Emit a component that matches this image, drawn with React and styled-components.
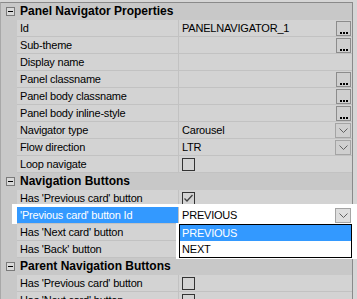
import React from "react";
import styled, { createGlobalStyle } from "styled-components";

const Global = createGlobalStyle`
  html, body { margin: 0; padding: 0; background: #d6d6d6; }
  body { font-family: "Liberation Sans", Arial, sans-serif; font-size: 11px; letter-spacing: -0.2px; color: #000; }
  #root { width: 357px; height: 299px; overflow: hidden; }
`;

const ROW = 17;

const Wrap = styled.div`
  position: relative;
  width: 357px;
  height: 299px;
  overflow: hidden;
  padding-top: 2px;
  box-sizing: border-box;
`;

const Grid = styled.div`
  width: 351px;
  border-top: 1px solid #8a8a8a;
  border-left: 1px solid #a8a8a8;
  border-right: 1px solid #8a8a8a;
  background: #c8c8c8;
  display: flex;
  flex-direction: column;
`;

const Header = styled.div`
  display: grid;
  grid-template-columns: 16px 1fr;
  align-items: center;
  height: ${ROW - 1}px;
  border-bottom: 1px solid #c8c8c8;
  background: #c8c8c8;
  font-weight: bold;
  font-size: 12px;
  letter-spacing: 0;
`;

const Toggle = styled.span`
  width: 7px;
  height: 7px;
  margin-left: 5px;
  border: 1px solid #7a7a7a;
  background: #d8d8d8;
  position: relative;
  box-sizing: content-box;
  &::after {
    content: "";
    position: absolute;
    left: 1px;
    top: 3px;
    width: 5px;
    height: 1px;
    background: #000;
  }
`;

const Title = styled.span`
  padding-left: 3px;
`;

const Row = styled.div`
  display: grid;
  grid-template-columns: 16px 161px 1px 1fr;
  height: ${ROW}px;
`;

const Gutter = styled.div`
  background: #c8c8c8;
`;

const Label = styled.div`
  display: flex;
  align-items: center;
  padding-left: 3px;
  white-space: nowrap;
  overflow: hidden;
  border-bottom: 1px solid #c2c2c2;
  background: ${(p) => (p.$selected ? "#3399ff" : "#d3d3d3")};
  color: ${(p) => (p.$selected ? "#fff" : "#000")};
`;

const Divider = styled.div`
  background: #c2c2c2;
`;

const Value = styled.div`
  display: flex;
  align-items: center;
  padding: 0 1px 0 3px;
  border-bottom: 1px solid ${(p) => (p.$editing ? "#fff" : "#c2c2c2")};
  background: ${(p) => (p.$editing ? "#fff" : "#d3d3d3")};
  white-space: nowrap;
  overflow: hidden;
`;

const ValueText = styled.span`
  flex: 1;
`;

const EllipsisBtn = styled.span`
  width: 13px;
  height: 13px;
  border: 1px solid #8c8c8c;
  background: #cfcfcf;
  position: relative;
  box-sizing: content-box;
  &::after {
    content: "";
    position: absolute;
    left: 3px;
    bottom: 1px;
    width: 2px;
    height: 2px;
    background: #000;
    box-shadow: 3px 0 0 #000, 6px 0 0 #000;
  }
`;

const DropBtn = styled.span`
  width: 14px;
  height: 13px;
  border: 1px solid #a4a4a4;
  background: ${(p) => (p.$light ? "#dedede" : "#cfcfcf")};
  display: flex;
  align-items: center;
  justify-content: center;
  box-sizing: content-box;
`;

const Check = styled.span`
  width: 11px;
  height: 11px;
  border: 1px solid #333;
  display: flex;
  align-items: center;
  justify-content: center;
  box-sizing: content-box;
`;

const Frame = styled.div`
  position: absolute;
  background: #fff;
  pointer-events: none;
`;

const Popup = styled.div`
  position: absolute;
  left: 176px;
  top: 224px;
  width: 181px;
  height: 35px;
  background: #fff;
  box-sizing: border-box;
  padding: 0 5px 1px 3px;
`;

const List = styled.div`
  border: 1px solid #000;
  height: 100%;
  box-sizing: border-box;
  display: flex;
  flex-direction: column;
`;

const Item = styled.div`
  height: 16px;
  display: flex;
  align-items: center;
  padding-left: 2px;
  background: ${(p) => (p.$active ? "#3399ff" : "#fff")};
  color: ${(p) => (p.$active ? "#fff" : "#000")};
`;

const Chevron = () => (
  <svg width="9" height="5" viewBox="0 0 9 5">
    <path d="M0.5 0.5 L4.5 4.5 L8.5 0.5" fill="none" stroke="#606060" strokeWidth="1" />
  </svg>
);

const Tick = () => (
  <svg width="11" height="11" viewBox="0 0 11 11">
    <path d="M1.5 5.5 L4 8 L9.5 2" fill="none" stroke="#404040" strokeWidth="1.3" />
  </svg>
);

const sections = [
  {
    title: "Panel Navigator Properties",
    rows: [
      { label: "Id", value: "PANELNAVIGATOR_1", kind: "dots" },
      { label: "Sub-theme", kind: "dots" },
      { label: "Display name" },
      { label: "Panel classname", kind: "dots" },
      { label: "Panel body classname", kind: "dots" },
      { label: "Panel body inline-style", kind: "dots" },
      { label: "Navigator type", value: "Carousel", kind: "drop" },
      { label: "Flow direction", value: "LTR", kind: "drop" },
      { label: "Loop navigate", kind: "check" },
    ],
  },
  {
    title: "Navigation Buttons",
    rows: [
      { label: "Has 'Previous card' button", kind: "checked" },
      { label: "'Previous card' button Id", value: "PREVIOUS", kind: "drop", selected: true },
      { label: "Has 'Next card' button" },
      { label: "Has 'Back' button" },
    ],
  },
  {
    title: "Parent Navigation Buttons",
    rows: [
      { label: "Has 'Previous card' button", kind: "check" },
      { label: "Has 'Next card' button", kind: "check" },
    ],
  },
];

function Editor({ kind, selected }) {
  if (kind === "dots") return <EllipsisBtn />;
  if (kind === "drop")
    return (
      <DropBtn $light={selected}>
        <Chevron />
      </DropBtn>
    );
  return null;
}

export default function App() {
  return (
    <Wrap>
      <Global />
      <Grid>
        {sections.map((s) => (
          <React.Fragment key={s.title}>
            <Header>
              <Toggle />
              <Title>{s.title}</Title>
            </Header>
            {s.rows.map((r, i) => (
              <Row key={s.title + i}>
                <Gutter />
                <Label $selected={r.selected}>{r.label}</Label>
                <Divider />
                <Value $editing={r.selected}>
                  {r.kind === "check" || r.kind === "checked" ? (
                    <Check>{r.kind === "checked" && <Tick />}</Check>
                  ) : (
                    <>
                      <ValueText>{r.value}</ValueText>
                      <Editor kind={r.kind} selected={r.selected} />
                    </>
                  )}
                </Value>
              </Row>
            ))}
          </React.Fragment>
        ))}
      </Grid>
      <Frame style={{ left: 12, top: 204, width: 345, height: 3 }} />
      <Frame style={{ left: 12, top: 204, width: 5, height: 20 }} />
      <Frame style={{ left: 352, top: 204, width: 5, height: 20 }} />
      <Frame style={{ left: 176, top: 223, width: 3, height: 2 }} />
      <Popup>
        <List>
          <Item $active>PREVIOUS</Item>
          <Item>NEXT</Item>
        </List>
      </Popup>
    </Wrap>
  );
}
